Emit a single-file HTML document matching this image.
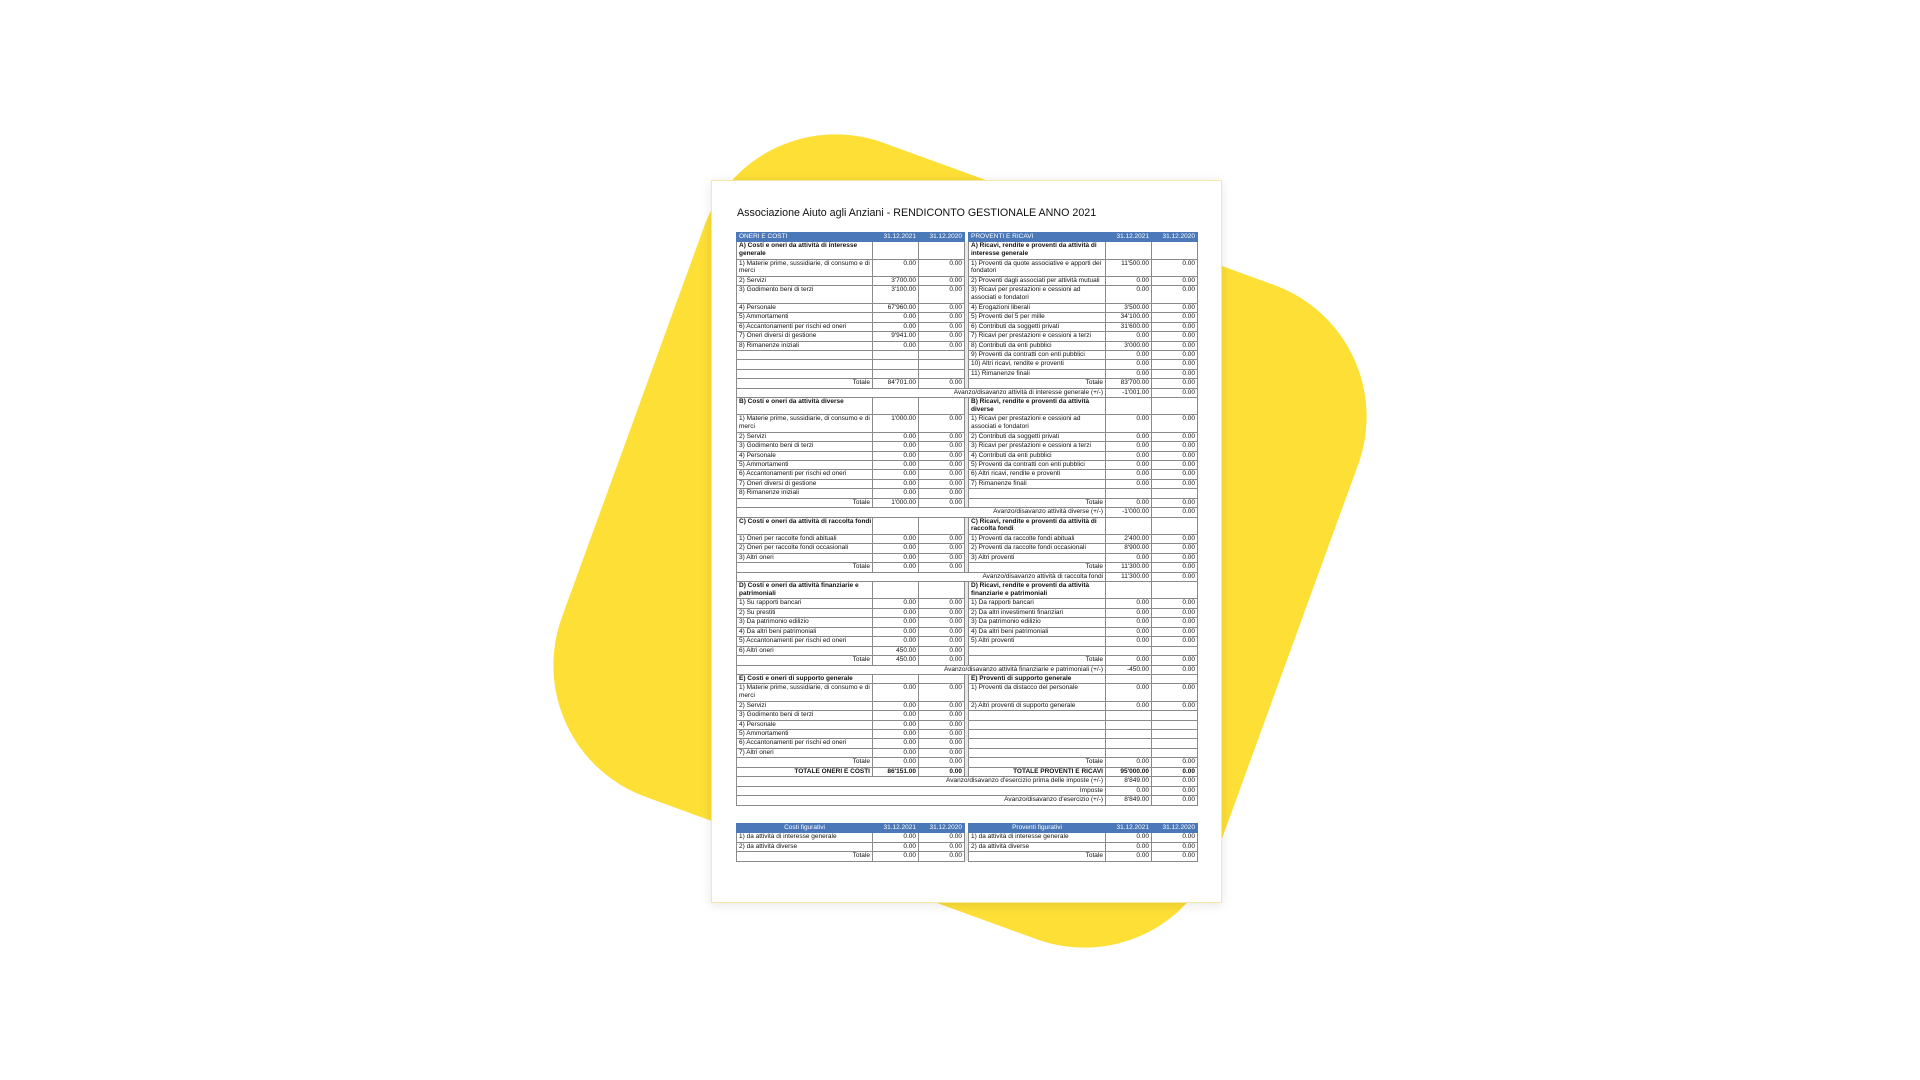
<!DOCTYPE html>
<html><head><meta charset="utf-8"><style>
html,body{margin:0;padding:0;width:1920px;height:1080px;overflow:hidden;background:#fff;font-family:"Liberation Sans",Arial,sans-serif;}
.shape{position:absolute;left:612px;top:193px;width:696px;height:696px;border-radius:140px;background:#fddf36;transform:rotate(20deg);}
.doc{position:absolute;left:711px;top:180px;width:509px;height:721px;background:#fff;border:1px solid #f3e8a8;box-shadow:0 2px 10px rgba(0,0,0,0.10);}
.title{position:absolute;left:737px;top:207px;font-size:10.7px;color:#111;white-space:nowrap;}
table{position:absolute;left:736px;border-collapse:collapse;table-layout:fixed;font-size:6.5px;color:#111;}
td{border:0.8px solid #8a8a8a;padding:0 2px;vertical-align:top;line-height:7.6px;white-space:nowrap;overflow:hidden;}
tr{height:9.45px;}
tr.d{height:17.3px;}
td.n{text-align:right;}
td.g{padding:0;border-top:none;border-bottom:none;background:#e8e8e8;}
tr.h td{background:#4a78b8;color:#fff;border-color:#4a78b8;}
tr.h td.g{background:#fff;}
b{font-weight:bold;}
.r{text-align:right;}
.c{text-align:center;}
</style></head><body>
<div class="shape"></div>
<div class="doc"></div>
<div class="title">Associazione Aiuto agli Anziani - RENDICONTO GESTIONALE ANNO 2021</div>
<table style="top:232px;width:461px">
<colgroup><col style="width:136px"><col style="width:46px"><col style="width:46px"><col style="width:4px"><col style="width:137px"><col style="width:46px"><col style="width:46px"></colgroup>
<tr class="h"><td>ONERI E COSTI</td><td class="n">31.12.2021</td><td class="n">31.12.2020</td><td class="g"></td><td>PROVENTI E RICAVI</td><td class="n">31.12.2021</td><td class="n">31.12.2020</td></tr>
<tr class="d"><td><b>A) Costi e oneri da attività di interesse<br>generale</b></td><td></td><td></td><td class="g"></td><td><b>A) Ricavi, rendite e proventi da attività di<br>interesse generale</b></td><td></td><td></td></tr>
<tr class="d"><td>1) Materie prime, sussidiarie, di consumo e di<br>merci</td><td class="n">0.00</td><td class="n">0.00</td><td class="g"></td><td>1) Proventi da quote associative e apporti dei<br>fondatori</td><td class="n">11'500.00</td><td class="n">0.00</td></tr>
<tr><td>2) Servizi</td><td class="n">3'700.00</td><td class="n">0.00</td><td class="g"></td><td>2) Proventi dagli associati per attività mutuali</td><td class="n">0.00</td><td class="n">0.00</td></tr>
<tr class="d"><td>3) Godimento beni di terzi</td><td class="n">3'100.00</td><td class="n">0.00</td><td class="g"></td><td>3) Ricavi per prestazioni e cessioni ad<br>associati e fondatori</td><td class="n">0.00</td><td class="n">0.00</td></tr>
<tr><td>4) Personale</td><td class="n">67'960.00</td><td class="n">0.00</td><td class="g"></td><td>4) Erogazioni liberali</td><td class="n">3'500.00</td><td class="n">0.00</td></tr>
<tr><td>5) Ammortamenti</td><td class="n">0.00</td><td class="n">0.00</td><td class="g"></td><td>5) Proventi del 5 per mille</td><td class="n">34'100.00</td><td class="n">0.00</td></tr>
<tr><td>6) Accantonamenti per rischi ed oneri</td><td class="n">0.00</td><td class="n">0.00</td><td class="g"></td><td>6) Contributi da soggetti privati</td><td class="n">31'600.00</td><td class="n">0.00</td></tr>
<tr><td>7) Oneri diversi di gestione</td><td class="n">9'941.00</td><td class="n">0.00</td><td class="g"></td><td>7) Ricavi per prestazioni e cessioni a terzi</td><td class="n">0.00</td><td class="n">0.00</td></tr>
<tr><td>8) Rimanenze iniziali</td><td class="n">0.00</td><td class="n">0.00</td><td class="g"></td><td>8) Contributi da enti pubblici</td><td class="n">3'000.00</td><td class="n">0.00</td></tr>
<tr><td></td><td></td><td></td><td class="g"></td><td>9) Proventi da contratti con enti pubblici</td><td class="n">0.00</td><td class="n">0.00</td></tr>
<tr><td></td><td></td><td></td><td class="g"></td><td>10) Altri ricavi, rendite e proventi</td><td class="n">0.00</td><td class="n">0.00</td></tr>
<tr><td></td><td></td><td></td><td class="g"></td><td>11) Rimanenze finali</td><td class="n">0.00</td><td class="n">0.00</td></tr>
<tr><td class="r">Totale</td><td class="n">84'701.00</td><td class="n">0.00</td><td class="g"></td><td class="r">Totale</td><td class="n">83'700.00</td><td class="n">0.00</td></tr>
<tr><td colspan="5" class="r">Avanzo/disavanzo attività di interesse generale (+/-)</td><td class="n">-1'001.00</td><td class="n">0.00</td></tr>
<tr class="d"><td><b>B) Costi e oneri da attività diverse</b></td><td></td><td></td><td class="g"></td><td><b>B) Ricavi, rendite e proventi da attività<br>diverse</b></td><td></td><td></td></tr>
<tr class="d"><td>1) Materie prime, sussidiarie, di consumo e di<br>merci</td><td class="n">1'000.00</td><td class="n">0.00</td><td class="g"></td><td>1) Ricavi per prestazioni e cessioni ad<br>associati e fondatori</td><td class="n">0.00</td><td class="n">0.00</td></tr>
<tr><td>2) Servizi</td><td class="n">0.00</td><td class="n">0.00</td><td class="g"></td><td>2) Contributi da soggetti privati</td><td class="n">0.00</td><td class="n">0.00</td></tr>
<tr><td>3) Godimento beni di terzi</td><td class="n">0.00</td><td class="n">0.00</td><td class="g"></td><td>3) Ricavi per prestazioni e cessioni a terzi</td><td class="n">0.00</td><td class="n">0.00</td></tr>
<tr><td>4) Personale</td><td class="n">0.00</td><td class="n">0.00</td><td class="g"></td><td>4) Contributi da enti pubblici</td><td class="n">0.00</td><td class="n">0.00</td></tr>
<tr><td>5) Ammortamenti</td><td class="n">0.00</td><td class="n">0.00</td><td class="g"></td><td>5) Proventi da contratti con enti pubblici</td><td class="n">0.00</td><td class="n">0.00</td></tr>
<tr><td>6) Accantonamenti per rischi ed oneri</td><td class="n">0.00</td><td class="n">0.00</td><td class="g"></td><td>6) Altri ricavi, rendite e proventi</td><td class="n">0.00</td><td class="n">0.00</td></tr>
<tr><td>7) Oneri diversi di gestione</td><td class="n">0.00</td><td class="n">0.00</td><td class="g"></td><td>7) Rimanenze finali</td><td class="n">0.00</td><td class="n">0.00</td></tr>
<tr><td>8) Rimanenze iniziali</td><td class="n">0.00</td><td class="n">0.00</td><td class="g"></td><td></td><td></td><td></td></tr>
<tr><td class="r">Totale</td><td class="n">1'000.00</td><td class="n">0.00</td><td class="g"></td><td class="r">Totale</td><td class="n">0.00</td><td class="n">0.00</td></tr>
<tr><td colspan="5" class="r">Avanzo/disavanzo attività diverse (+/-)</td><td class="n">-1'000.00</td><td class="n">0.00</td></tr>
<tr class="d"><td><b>C) Costi e oneri da attività di raccolta fondi</b></td><td></td><td></td><td class="g"></td><td><b>C) Ricavi, rendite e proventi da attività di<br>raccolta fondi</b></td><td></td><td></td></tr>
<tr><td>1) Oneri per raccolte fondi abituali</td><td class="n">0.00</td><td class="n">0.00</td><td class="g"></td><td>1) Proventi da raccolte fondi abituali</td><td class="n">2'400.00</td><td class="n">0.00</td></tr>
<tr><td>2) Oneri per raccolte fondi occasionali</td><td class="n">0.00</td><td class="n">0.00</td><td class="g"></td><td>2) Proventi da raccolte fondi occasionali</td><td class="n">8'900.00</td><td class="n">0.00</td></tr>
<tr><td>3) Altri oneri</td><td class="n">0.00</td><td class="n">0.00</td><td class="g"></td><td>3) Altri proventi</td><td class="n">0.00</td><td class="n">0.00</td></tr>
<tr><td class="r">Totale</td><td class="n">0.00</td><td class="n">0.00</td><td class="g"></td><td class="r">Totale</td><td class="n">11'300.00</td><td class="n">0.00</td></tr>
<tr><td colspan="5" class="r">Avanzo/disavanzo attività di raccolta fondi</td><td class="n">11'300.00</td><td class="n">0.00</td></tr>
<tr class="d"><td><b>D) Costi e oneri da attività finanziarie e<br>patrimoniali</b></td><td></td><td></td><td class="g"></td><td><b>D) Ricavi, rendite e proventi da attività<br>finanziarie e patrimoniali</b></td><td></td><td></td></tr>
<tr><td>1) Su rapporti bancari</td><td class="n">0.00</td><td class="n">0.00</td><td class="g"></td><td>1) Da rapporti bancari</td><td class="n">0.00</td><td class="n">0.00</td></tr>
<tr><td>2) Su prestiti</td><td class="n">0.00</td><td class="n">0.00</td><td class="g"></td><td>2) Da altri investimenti finanziari</td><td class="n">0.00</td><td class="n">0.00</td></tr>
<tr><td>3) Da patrimonio edilizio</td><td class="n">0.00</td><td class="n">0.00</td><td class="g"></td><td>3) Da patrimonio edilizio</td><td class="n">0.00</td><td class="n">0.00</td></tr>
<tr><td>4) Da altri beni patrimoniali</td><td class="n">0.00</td><td class="n">0.00</td><td class="g"></td><td>4) Da altri beni patrimoniali</td><td class="n">0.00</td><td class="n">0.00</td></tr>
<tr><td>5) Accantonamenti per rischi ed oneri</td><td class="n">0.00</td><td class="n">0.00</td><td class="g"></td><td>5) Altri proventi</td><td class="n">0.00</td><td class="n">0.00</td></tr>
<tr><td>6) Altri oneri</td><td class="n">450.00</td><td class="n">0.00</td><td class="g"></td><td></td><td></td><td></td></tr>
<tr><td class="r">Totale</td><td class="n">450.00</td><td class="n">0.00</td><td class="g"></td><td class="r">Totale</td><td class="n">0.00</td><td class="n">0.00</td></tr>
<tr><td colspan="5" class="r">Avanzo/disavanzo attività finanziarie e patrimoniali (+/-)</td><td class="n">-450.00</td><td class="n">0.00</td></tr>
<tr><td><b>E) Costi e oneri di supporto generale</b></td><td></td><td></td><td class="g"></td><td><b>E) Proventi di supporto generale</b></td><td></td><td></td></tr>
<tr class="d"><td>1) Materie prime, sussidiarie, di consumo e di<br>merci</td><td class="n">0.00</td><td class="n">0.00</td><td class="g"></td><td>1) Proventi da distacco del personale</td><td class="n">0.00</td><td class="n">0.00</td></tr>
<tr><td>2) Servizi</td><td class="n">0.00</td><td class="n">0.00</td><td class="g"></td><td>2) Altri proventi di supporto generale</td><td class="n">0.00</td><td class="n">0.00</td></tr>
<tr><td>3) Godimento beni di terzi</td><td class="n">0.00</td><td class="n">0.00</td><td class="g"></td><td></td><td></td><td></td></tr>
<tr><td>4) Personale</td><td class="n">0.00</td><td class="n">0.00</td><td class="g"></td><td></td><td></td><td></td></tr>
<tr><td>5) Ammortamenti</td><td class="n">0.00</td><td class="n">0.00</td><td class="g"></td><td></td><td></td><td></td></tr>
<tr><td>6) Accantonamenti per rischi ed oneri</td><td class="n">0.00</td><td class="n">0.00</td><td class="g"></td><td></td><td></td><td></td></tr>
<tr><td>7) Altri oneri</td><td class="n">0.00</td><td class="n">0.00</td><td class="g"></td><td></td><td></td><td></td></tr>
<tr><td class="r">Totale</td><td class="n">0.00</td><td class="n">0.00</td><td class="g"></td><td class="r">Totale</td><td class="n">0.00</td><td class="n">0.00</td></tr>
<tr><td class="r"><b>TOTALE ONERI E COSTI</b></td><td class="n"><b>86'151.00</b></td><td class="n"><b>0.00</b></td><td class="g"></td><td class="r"><b>TOTALE PROVENTI E RICAVI</b></td><td class="n"><b>95'000.00</b></td><td class="n"><b>0.00</b></td></tr>
<tr><td colspan="5" class="r">Avanzo/disavanzo d'esercizio prima delle imposte (+/-)</td><td class="n">8'849.00</td><td class="n">0.00</td></tr>
<tr><td colspan="5" class="r">Imposte</td><td class="n">0.00</td><td class="n">0.00</td></tr>
<tr><td colspan="5" class="r">Avanzo/disavanzo d'esercizio (+/-)</td><td class="n">8'849.00</td><td class="n">0.00</td></tr>
</table>
<table style="top:823px;width:461px">
<colgroup><col style="width:136px"><col style="width:46px"><col style="width:46px"><col style="width:4px"><col style="width:137px"><col style="width:46px"><col style="width:46px"></colgroup>
<tr class="h"><td class="c">Costi figurativi</td><td class="n">31.12.2021</td><td class="n">31.12.2020</td><td class="g"></td><td class="c">Proventi figurativi</td><td class="n">31.12.2021</td><td class="n">31.12.2020</td></tr>
<tr><td>1) da attività di interesse generale</td><td class="n">0.00</td><td class="n">0.00</td><td class="g"></td><td>1) da attività di interesse generale</td><td class="n">0.00</td><td class="n">0.00</td></tr>
<tr><td>2) da attività diverse</td><td class="n">0.00</td><td class="n">0.00</td><td class="g"></td><td>2) da attività diverse</td><td class="n">0.00</td><td class="n">0.00</td></tr>
<tr><td class="r">Totale</td><td class="n">0.00</td><td class="n">0.00</td><td class="g"></td><td class="r">Totale</td><td class="n">0.00</td><td class="n">0.00</td></tr>
</table>
</body></html>
